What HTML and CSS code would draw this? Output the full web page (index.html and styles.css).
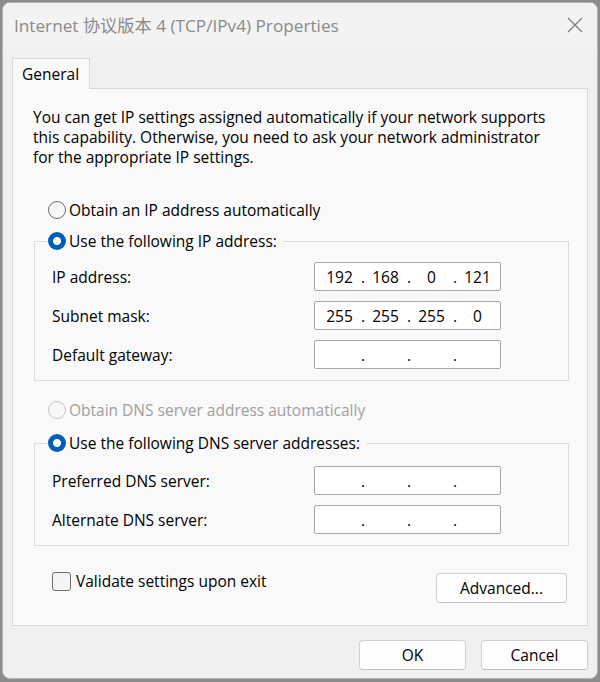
FILE: index.html
```html
<!DOCTYPE html>
<html>
<head>
<meta charset="utf-8">
<link rel="stylesheet" href="styles.css">
</head>
<body>
<div class="window">
  <div class="titlebar">
    <span class="title">Internet 协议版本 4 (TCP/IPv4) Properties</span>
    <span class="close">
      <svg width="16" height="16" viewBox="0 0 16 16"><path d="M1 1 L15 15 M15 1 L1 15" stroke="#7a7a7a" stroke-width="1.2" fill="none"/></svg>
    </span>
  </div>
  <div class="body">
    <div class="tabs"><div class="tab">General</div></div>
    <div class="panel">
      <p class="desc">You can get IP settings assigned automatically if your network supports this capability. Otherwise, you need to ask your network administrator for the appropriate IP settings.</p>

      <div class="radio-row first"><span class="radio"></span><span>Obtain an IP address automatically</span></div>

      <fieldset class="group">
        <legend class="radio-row"><span class="radio checked"></span><span>Use the following IP address:</span></legend>
        <div class="field-row first-field">
          <span class="label">IP address:</span>
          <div class="ipbox"><span class="seg">192</span><span class="dot">.</span><span class="seg">168</span><span class="dot">.</span><span class="seg">0</span><span class="dot">.</span><span class="seg">121</span></div>
        </div>
        <div class="field-row">
          <span class="label">Subnet mask:</span>
          <div class="ipbox"><span class="seg">255</span><span class="dot">.</span><span class="seg">255</span><span class="dot">.</span><span class="seg">255</span><span class="dot">.</span><span class="seg">0</span></div>
        </div>
        <div class="field-row">
          <span class="label">Default gateway:</span>
          <div class="ipbox"><span class="seg"></span><span class="dot">.</span><span class="seg"></span><span class="dot">.</span><span class="seg"></span><span class="dot">.</span><span class="seg"></span></div>
        </div>
      </fieldset>

      <div class="radio-row disabled"><span class="radio"></span><span>Obtain DNS server address automatically</span></div>

      <fieldset class="group dns">
        <legend class="radio-row"><span class="radio checked"></span><span>Use the following DNS server addresses:</span></legend>
        <div class="field-row first-field">
          <span class="label">Preferred DNS server:</span>
          <div class="ipbox"><span class="seg"></span><span class="dot">.</span><span class="seg"></span><span class="dot">.</span><span class="seg"></span><span class="dot">.</span><span class="seg"></span></div>
        </div>
        <div class="field-row">
          <span class="label">Alternate DNS server:</span>
          <div class="ipbox"><span class="seg"></span><span class="dot">.</span><span class="seg"></span><span class="dot">.</span><span class="seg"></span><span class="dot">.</span><span class="seg"></span></div>
        </div>
      </fieldset>

      <div class="bottom-row">
        <div class="check-row"><span class="checkbox"></span><span>Validate settings upon exit</span></div>
        <div class="btn advanced">Advanced...</div>
      </div>
    </div>
    <div class="footer">
      <div class="btn">OK</div>
      <div class="btn">Cancel</div>
    </div>
  </div>
</div>
</body>
</html>
```
FILE: styles.css
```css
html, body {
  margin: 0;
  padding: 0;
}
body {
  width: 600px;
  height: 682px;
  background: #8c8c8c;
  font-family: "Open Sans", "Noto Sans", "Noto Sans CJK SC", sans-serif;
  font-size: 15.5px;
  color: #000;
  overflow: hidden;
}
.window {
  box-sizing: border-box;
  margin: 2px 0 0 2px;
  width: 596px;
  height: 677px;
  border: 1px solid #b5b5b5;
  border-radius: 8px;
  background: #f0f0f0;
  overflow: hidden;
}
.titlebar {
  height: 46px;
  background: #f3f3f3;
  display: flex;
  align-items: center;
  justify-content: space-between;
  padding: 0 14px 0 11px;
}
.title {
  font-size: 17.2px;
  color: #8a8a8a;
  margin-top: -4px;
}
.close {
  display: flex;
  margin-top: -3px;
}
.body {
  padding: 9px 9px 0 9px;
}
.tabs {
  display: flex;
  height: 30px;
}
.tab {
  box-sizing: border-box;
  width: 78px;
  height: 31px;
  padding: 4px 0 0 9px;
  border: 1px solid #d9d9d9;
  border-bottom: none;
  background: #f9f9f9;
  position: relative;
  z-index: 1;
}
.panel {
  box-sizing: border-box;
  height: 538px;
  border: 1px solid #d9d9d9;
  background: #f9f9f9;
  padding: 0 19px 0 20px;
}
.desc {
  margin: 18px 0 0 0;
  line-height: 20px;
  padding-right: 8px;
}
.radio-row {
  display: flex;
  align-items: center;
  height: 20px;
  line-height: 20px;
}
.radio-row.first {
  margin: 33px 0 0 15px;
}
.radio {
  box-sizing: border-box;
  width: 18px;
  height: 18px;
  border-radius: 50%;
  border: 1px solid #6e6e6e;
  background: #f7f7f7;
  margin-right: 3px;
  flex: none;
}
.radio.checked {
  border: none;
  background: radial-gradient(circle, #ffffff 0 3.6px, #005fb8 4.4px);
}
.radio-row.disabled {
  color: #a0a0a0;
  margin: 19px 0 0 15px;
}
.radio-row.disabled .radio {
  border-color: #c4c4c4;
}
.group {
  margin: 11px 0 0 1px;
  padding: 0 0 11px 0;
  width: 535px;
  box-sizing: border-box;
  border: 1px solid #dcdcdc;
}
.group legend {
  margin-left: 13px;
  padding: 0 6px 0 0;
}
.group.dns {
  margin-top: 13px;
  padding-bottom: 11px;
}
.field-row {
  display: flex;
  align-items: center;
  margin-top: 10px;
  padding-left: 17px;
}
.field-row.first-field {
  margin-top: 11px;
}
.dns .field-row.first-field {
  margin-top: 13px;
}
.label {
  width: 262px;
}
.ipbox {
  box-sizing: border-box;
  width: 187px;
  height: 29px;
  border: 1px solid #a8a8a8;
  border-radius: 2px;
  background: #fff;
  display: flex;
  align-items: center;
  padding-left: 3px;
}
.seg {
  width: 43px;
  text-align: center;
}
.dot {
  width: 3px;
  text-align: center;
}
.bottom-row {
  display: flex;
  justify-content: space-between;
  align-items: flex-start;
  margin: 25px 1px 0 19px;
}
.check-row {
  display: flex;
  align-items: center;
  line-height: 20px;
}
.checkbox {
  box-sizing: border-box;
  width: 19px;
  height: 19px;
  border: 1px solid #6e6e6e;
  border-radius: 3px;
  background: #f5f5f5;
  margin-right: 5px;
}
.btn {
  box-sizing: border-box;
  width: 107px;
  height: 30px;
  border: 1px solid #d0d0d0;
  border-bottom-color: #c0c0c0;
  border-radius: 4px;
  background: #fdfdfd;
  display: flex;
  align-items: center;
  justify-content: center;
}
.btn.advanced {
  width: 131px;
  margin-top: 2px;
}
.footer {
  display: flex;
  justify-content: flex-end;
  gap: 15px;
  margin-top: 14px;
}
```
